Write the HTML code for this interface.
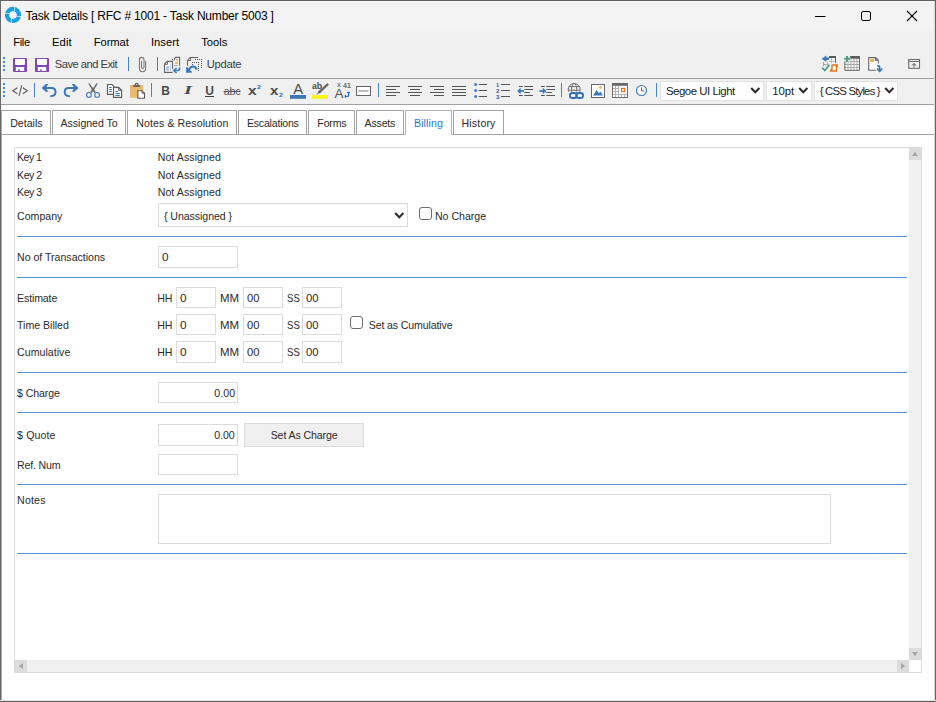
<!DOCTYPE html>
<html lang="en">
<head>
<meta charset="utf-8">
<title>Task Details [ RFC # 1001 - Task Number 5003 ]</title>
<style>
html,body{margin:0;padding:0;}
body{width:936px;height:702px;overflow:hidden;background:#fff;font-family:"Liberation Sans",sans-serif;}
#win{position:relative;width:936px;height:702px;overflow:hidden;background:#fff;}
#win *{box-sizing:border-box;}
.abs,.t,.ic,.ln,.sep,.box,.tab{position:absolute;}
.t{white-space:pre;line-height:16px;height:16px;}
#chrome{position:absolute;left:0;top:0;width:936px;height:105px;background:#f0f0f0;}
#titlebar{position:absolute;left:0;top:0;width:936px;height:31px;background:#f3f3f3;}
.hl{position:absolute;left:0;width:936px;height:1px;background:#a0a0a0;}
.sep{width:1px;background:#4d82cc;}
.grip{position:absolute;width:2px;height:14px;background:repeating-linear-gradient(to bottom,#3f8be0 0,#3f8be0 2px,transparent 2px,transparent 4px);}
.ic{overflow:visible;}
.tab{top:110px;height:25px;border:1px solid #a3a3a3;background:#fff;}
.tab.on{border-color:#b4b4b4;border-bottom-color:#fff;}
.box{border:1px solid #dcdcdc;background:#fff;}
.ln{left:17px;width:890px;height:1px;background:#5c8fd6;}
.cb{position:absolute;width:13px;height:13px;border:1px solid #6e6e6e;border-radius:3px;background:#fff;}
.sb{position:absolute;background:#f0f0f0;}
.sbb{position:absolute;background:#dcdcdc;}
.bd{position:absolute;}

</style>
</head>
<body>
<div id="win">
<div id="chrome"></div>
<div id="titlebar"></div>
<div class="hl" style="top:78px"></div>
<div class="hl" style="top:104px"></div>

<!-- title bar -->
<svg class="ic" style="left:4px;top:6px" width="18" height="18" viewBox="4 6 18 18">
 <circle cx="13" cy="14.95" r="5.95" fill="none" stroke="#1a9fe0" stroke-width="4.3"/>
 <g stroke="#f3f3f3" stroke-width="0.75" stroke-linecap="round" fill="none">
  <path d="M14.3 11.2 Q15.1 9.4 14.5 6.8"/>
  <path d="M14.3 11.2 Q15.1 9.4 14.5 6.8" transform="rotate(90 13 14.95)"/>
  <path d="M14.3 11.2 Q15.1 9.4 14.5 6.8" transform="rotate(180 13 14.95)"/>
  <path d="M14.3 11.2 Q15.1 9.4 14.5 6.8" transform="rotate(270 13 14.95)"/>
 </g>
</svg>
<svg class="ic" style="left:810px;top:6px" width="120" height="20" viewBox="0 0 120 20" fill="none" stroke="#000" stroke-width="1">
 <path d="M5 10.5 H15.5"/>
 <rect x="51.5" y="5.5" width="9" height="9" rx="1.6"/>
 <path d="M97 5 L107 15 M107 5 L97 15" stroke-width="1.1"/>
</svg>

<!-- toolbar 1 -->
<div class="grip" style="left:3px;top:57px"></div>
<div class="sep" style="left:128px;top:57px;height:14px"></div>
<div class="sep" style="left:157px;top:57px;height:14px"></div>
<svg class="ic" style="left:0;top:52px" width="936" height="26" viewBox="0 52 936 26">
 <!-- save -->
 <g id="save1">
  <rect x="13" y="58" width="14" height="14" rx="0.7" fill="#8347ad"/>
  <path d="M15 59 H25 V63.8 Q25 65 23.8 65 H16.2 Q15 65 15 63.8 Z" fill="#fff"/>
  <path d="M15.8 67 H24.2 V71 H19.7 V69.2 H18.2 V71 H15.8 Z" fill="#fff"/>
 </g>
 <g id="save2" transform="translate(22 0)">
  <rect x="13" y="58" width="14" height="14" rx="0.7" fill="#8347ad"/>
  <path d="M15 59 H25 V63.8 Q25 65 23.8 65 H16.2 Q15 65 15 63.8 Z" fill="#fff"/>
  <path d="M15.8 67 H24.2 V71 H19.7 V69.2 H18.2 V71 H15.8 Z" fill="#fff"/>
 </g>
 <!-- paperclip -->
 <g fill="none" stroke="#767676" stroke-width="1.05" stroke-linecap="round">
  <path d="M145.7 61.2 V68.6 A3.15 3.15 0 0 1 139.4 68.6 V59.7 A2.3 2.3 0 0 1 144 59.7 V67.2 A1.25 1.25 0 0 1 141.5 67.2 V61.6"/>
 </g>
 <!-- documents with chart + arrow -->
 <g fill="none" stroke-width="1.1">
  <path d="M174.4 61 V58.8 L175.7 57.4 H179.6 V66 H174 Z" fill="#fbfbfb" stroke="none"/>
  <path d="M174.4 60.6 V58.8 L175.7 57.4 H179.6 V65.8" stroke="#666"/>
  <rect x="172" y="59" width="1" height="1" fill="#555" stroke="none"/>
  <rect x="176.2" y="59.1" width="1.8" height="1.7" fill="#e6a84a" stroke="none"/>
  <rect x="175" y="62.1" width="3" height="1.7" fill="#e6a84a" stroke="none"/>
  <path d="M174.1 65.5 H177.8" stroke="#999" stroke-width="1"/>
  <path d="M164.5 72.4 V64.1 L167.2 61.4 H172.5 V72.4 Z" fill="#fff" stroke="none"/>
  <path d="M172.5 68.7 V61.4 H167.2 L164.5 64.1 V72.4 H172.7" stroke="#666" stroke-width="1.15"/>
  <path d="M164.6 64.3 H167.4 V61.6" stroke="#666" stroke-width="1"/>
  <rect x="166.1" y="66.2" width="2.7" height="4.5" fill="#a9c4e2" stroke="none"/>
  <rect x="170" y="63.3" width="1.1" height="7.4" fill="#c3d6ed" stroke="none"/>
  <path d="M179.6 67.2 V68.2 Q179.6 70.5 177.2 70.5 H174.4" stroke="#3b78b8" stroke-width="1.6"/>
  <path d="M176.6 68 L173.6 70.5 L176.6 73" stroke="#3b78b8" stroke-width="1.5"/>
 </g>
 <!-- undo page -->
 <g fill="none" stroke-width="1">
  <path d="M187.5 65.8 V60.4 L190.2 57.5 H198" stroke="#666" stroke-width="1.1"/>
  <path d="M187.8 60.5 H190.6 V57.6" stroke="#666"/>
  <g fill="#555" stroke="none"><rect x="195" y="59" width="1" height="1"/><rect x="197" y="59" width="1" height="1"/><rect x="199" y="59" width="1" height="1"/><rect x="201" y="59" width="1" height="1"/><rect x="201" y="61" width="1" height="1"/><rect x="201" y="63" width="1" height="1"/><rect x="201" y="65" width="1" height="1"/><rect x="201" y="67" width="1" height="1"/><rect x="192" y="62" width="1" height="1"/><rect x="194" y="62" width="1" height="1"/><rect x="196" y="62" width="1" height="1"/><rect x="198" y="62" width="1" height="1"/><rect x="198" y="64" width="1" height="1"/><rect x="198" y="66" width="1" height="1"/><rect x="198" y="68" width="1" height="1"/><rect x="198" y="70" width="1" height="1"/><rect x="192" y="64" width="1" height="1"/></g>
  <path d="M188.6 70.2 Q190.6 66.2 193.8 66.6 Q196 67 196.8 69.6" stroke="#3b78b8" stroke-width="2.1"/>
  <path d="M186.1 72.8 V67.2 H187.8 L189.4 70 L191.7 71.2 V72.8 Z" fill="#3b78b8" stroke="none"/>
 </g>
 <!-- right group A: arrow / table / check / scroll -->
 <g fill="none" stroke-width="1">
  <rect x="829" y="56" width="7" height="2.2" fill="#5a5a5a" stroke="none"/>
  <rect x="829" y="58.2" width="6" height="4.6" fill="#fff" stroke="none"/>
  <path d="M835.5 58 V62.8" stroke="#5a5a5a"/>
  <path d="M829 61.3 H835 M831.6 58.2 V63" stroke="#b0b0b0"/>
  <path d="M823.5 62 V66.2 M823.5 64.6 H827.6 V62.4" stroke="#a0a0a0"/>
  <path d="M821.7 58.7 L826.4 55.6 V57.6 H829.2 V59.9 H826.4 V61.9 Z" fill="#3b78b8" stroke="none"/>
  <path d="M822.2 67.6 L824.9 70.5 L829.4 64.7" stroke="#4f9a80" stroke-width="1.7"/>
  <path d="M832 65 H837.4 V66.4 H836.4 V71 H830.6 V70 H832 Z" fill="#fff" stroke="#e8731a" stroke-width="1.4" stroke-linejoin="round"/>
 </g>
 <!-- right group B: table with plus -->
 <g>
  <rect x="844.5" y="58" width="15.4" height="12.7" fill="#a8a8a8"/>
  <path d="M845 61 V70.2 H859.4 V58" fill="none" stroke="#5f5f5f" stroke-width="1"/>
  <rect x="849.6" y="56" width="10.3" height="2.4" fill="#5a5a5a"/>
  <g fill="#fff">
   <rect x="848.5" y="59.2" width="2" height="1.9"/><rect x="851.5" y="59.2" width="2" height="1.9"/><rect x="854.5" y="59.2" width="2" height="1.9"/><rect x="857.5" y="59.2" width="1.6" height="1.9"/>
   <rect x="845.5" y="62.1" width="2" height="1.9"/><rect x="848.5" y="62.1" width="2" height="1.9"/><rect x="851.5" y="62.1" width="2" height="1.9"/><rect x="854.5" y="62.1" width="2" height="1.9"/><rect x="857.5" y="62.1" width="1.6" height="1.9"/>
   <rect x="845.5" y="65" width="2" height="1.9"/><rect x="848.5" y="65" width="2" height="1.9"/><rect x="851.5" y="65" width="2" height="1.9"/><rect x="854.5" y="65" width="2" height="1.9"/><rect x="857.5" y="65" width="1.6" height="1.9"/>
   <rect x="845.5" y="67.9" width="2" height="1.9"/><rect x="848.5" y="67.9" width="2" height="1.9"/><rect x="851.5" y="67.9" width="2" height="1.9"/><rect x="854.5" y="67.9" width="2" height="1.9"/><rect x="857.5" y="67.9" width="1.6" height="1.9"/>
  </g>
  <rect x="843.6" y="55.4" width="6.6" height="6" fill="#f0f0f0"/>
  <path d="M844.2 58.8 H850 M847.1 56 V61.7" stroke="#4f9a80" stroke-width="2.1" fill="none"/>
 </g>
 <!-- right group C: page with arrow -->
 <g fill="none" stroke-width="1.1">
  <path d="M868.7 57.6 H875.6 L878.3 60.3 V70.3 H868.7 Z" fill="#fff" stroke="none"/>
  <path d="M878.3 63.6 V60.3 L875.6 57.6 H868.7 V70.3 H876" stroke="#666"/>
  <path d="M875.6 57.6 V60.3 H878.3" stroke="#666"/>
  <rect x="870" y="59" width="4.2" height="2.9" fill="#e9b364" stroke="none"/>
  <path d="M877.2 65.6 Q879.6 65.6 879.6 68 V70.6" stroke="#3b78b8" stroke-width="1.8"/>
  <path d="M877 68.6 L879.6 71.2 L882.2 68.6" fill="none" stroke="#3b78b8" stroke-width="1.7"/>
 </g>
 <!-- right group D: window with up arrow -->
 <g fill="none">
  <rect x="908.7" y="59.5" width="10.8" height="8.8" stroke="#6e6e6e" stroke-width="1.1"/>
  <path d="M908.7 61.5 H919.5" stroke="#6e6e6e" stroke-width="1"/>
  <path d="M911.3 65.4 L914.05 62.8 L916.8 65.4 Z" fill="#808080"/>
  <path d="M914.05 65.2 V67.8" stroke="#a0a0a0" stroke-width="1.5"/>
 </g>
</svg>



<!-- toolbar 2 -->
<div class="grip" style="left:3px;top:83px"></div>
<div class="sep" style="left:34px;top:83px;height:14px"></div>
<div class="sep" style="left:151px;top:83px;height:14px"></div>
<div class="sep" style="left:378px;top:83px;height:14px"></div>
<div class="sep" style="left:561px;top:83px;height:14px"></div>
<div class="sep" style="left:656px;top:83px;height:14px"></div>
<svg class="ic" style="left:0;top:79px" width="936" height="25" viewBox="0 79 936 25">
 <!-- source </> -->
 <g fill="none" stroke="#5c5c5c" stroke-width="1.1">
  <path d="M17.4 87.8 L12.8 90.8 L17.4 93.8"/>
  <path d="M21.8 85.4 L19 95.8"/>
  <path d="M22.8 87.8 L27.4 90.8 L22.8 93.8"/>
 </g>
 <!-- undo -->
 <g id="undo">
  <path d="M41.7 87.9 L45.8 84 H48.5 L46.6 86.4 V89.4 L48.5 91.8 H45.8 Z" fill="#3b78b8"/>
  <path d="M45.6 87.9 H51.6 C54.3 87.9 55.5 90 55.5 92 C55.5 94.6 53.4 96.2 50.3 96.2" fill="none" stroke="#3b78b8" stroke-width="2"/>
 </g>
 <!-- redo (mirror) -->
 <g transform="translate(120.2 0) scale(-1 1)">
  <path d="M41.7 87.9 L45.8 84 H48.5 L46.6 86.4 V89.4 L48.5 91.8 H45.8 Z" fill="#3b78b8"/>
  <path d="M45.6 87.9 H51.6 C54.3 87.9 55.5 90 55.5 92 C55.5 94.6 53.4 96.2 50.3 96.2" fill="none" stroke="#3b78b8" stroke-width="2"/>
 </g>
 <!-- cut -->
 <g fill="none">
  <path d="M88.3 83.5 L89.5 83.2 L95.9 92.2 L94.4 93 L92.2 90.6 Z" fill="#6a6a6a"/>
  <path d="M97.7 83.5 L96.5 83.2 L90.1 92.2 L91.6 93 L93.8 90.6 Z" fill="#6a6a6a"/>
  <circle cx="88.9" cy="94.9" r="2.4" stroke="#3b78b8" stroke-width="1.1"/>
  <circle cx="97.1" cy="94.9" r="2.4" stroke="#3b78b8" stroke-width="1.1"/>
 </g>
 <!-- copy -->
 <g fill="#fff" stroke="#5c5c5c" stroke-width="1.15">
  <path d="M107.5 84.5 H112 L114.2 86.7 V94.3 H107.5 Z"/>
  <path d="M109.2 87.5 H111.8 M109.2 89.5 H111.8 M109.2 91.5 H111.8" stroke="#3b78b8" stroke-width="1"/>
  <path d="M113.5 87.3 H118.6 L121.6 90.3 V97.4 H113.5 Z"/>
  <path d="M118.6 87.3 V90.3 H121.6" fill="none" stroke-width="1"/>
  <path d="M115.4 91.5 H117.8 M115.4 93.5 H119.8 M115.4 95.5 H119.8" stroke="#3b78b8" stroke-width="1"/>
 </g>
 <!-- paste -->
 <g>
  <rect x="130" y="85" width="13" height="12.8" fill="#e8b96f"/>
  <path d="M135.3 85.2 V84.4 Q135.3 83.4 136.65 83.4 Q138 83.4 138 84.4 V85.2" fill="none" stroke="#5c5c5c" stroke-width="1.1"/>
  <rect x="133.2" y="85.1" width="6.9" height="1.8" fill="#5c5c5c"/>
  <path d="M137.8 90.7 H142 L144.5 93.2 V98.2 H137.8 Z" fill="#fff" stroke="#5c5c5c" stroke-width="1.15"/>
  <path d="M142 90.7 V93.2 H144.5" fill="none" stroke="#5c5c5c" stroke-width="1"/>
 </g>
 <!-- underline bar for U -->
 <rect x="205" y="96" width="9" height="1" fill="#444"/>
 <!-- font color bar -->
 <rect x="290" y="95" width="16" height="3.8" fill="#3b76b5"/>
 <!-- highlight bar + pen -->
 <rect x="312" y="95" width="16" height="3.8" fill="#fbf31c"/>
 <path d="M327.4 84.6 L319.4 92" stroke="#6a6a6a" stroke-width="2.4" stroke-linecap="round" fill="none"/>
 <path d="M319.6 91.2 L315.6 94.8 L320.8 92.6 Z" fill="#555"/>
 <!-- font size arrows -->
 <g fill="none" stroke="#2f6fcc" stroke-width="1.4">
  <path d="M345.2 96.4 H347.4 Q348.6 96.4 348.6 95.2 V92.2"/>
  <path d="M347.2 92.4 H350" stroke-width="1.2"/>
  <path d="M345.4 95 V97.8" stroke-width="1.2"/>
 </g>
 <!-- horizontal rule -->
 <rect x="356.5" y="86.5" width="14" height="9" fill="#fff" stroke="#666" stroke-width="1"/>
 <path d="M358.6 91 H368.4" stroke="#aaa" stroke-width="1.6"/>
 <!-- alignment -->
 <g stroke="#555" stroke-width="1" fill="none">
  <path d="M386 86.5 H400 M386 89.5 H396 M386 92.5 H400 M386 95.5 H396"/>
  <path d="M408 86.5 H422 M410 89.5 H420 M408 92.5 H422 M410 95.5 H420"/>
  <path d="M430 86.5 H444 M434 89.5 H444 M430 92.5 H444 M434 95.5 H444"/>
  <path d="M452 86.5 H466 M452 89.5 H466 M452 92.5 H466 M452 95.5 H466"/>
 </g>
 <!-- bullet list -->
 <g>
  <circle cx="475.6" cy="84.6" r="1.5" fill="#4480c4"/><circle cx="475.6" cy="90.5" r="1.5" fill="#4480c4"/><circle cx="475.6" cy="96.4" r="1.5" fill="#4480c4"/>
  <path d="M478.8 84.5 H487 M478.8 90.5 H487 M478.8 96.5 H487" stroke="#555" stroke-width="1"/>
 </g>
 <!-- numbered list lines -->
 <path d="M501 84.5 H510 M501 90.5 H510 M501 96.5 H510" stroke="#555" stroke-width="1"/>
 <!-- outdent -->
 <g>
  <path d="M519 86.5 H522.8 M524.3 86.5 H533 M524.3 89.5 H533 M524.3 92.5 H529.8 M519 95.5 H522.8 M524.3 95.5 H533" stroke="#555" stroke-width="1"/>
  <path d="M517 91 L520.6 87.8 V94.2 Z" fill="#3b78b8"/>
  <path d="M520 91 H524" stroke="#3b78b8" stroke-width="1.8"/>
 </g>
 <!-- indent -->
 <g>
  <path d="M541 86.5 H544.8 M546.3 86.5 H555 M546.3 89.5 H555 M546.3 92.5 H551.8 M541 95.5 H544.8 M546.3 95.5 H555" stroke="#555" stroke-width="1"/>
  <path d="M546.4 91 L542.8 87.8 V94.2 Z" fill="#3b78b8"/>
  <path d="M539.4 91 H543.4" stroke="#3b78b8" stroke-width="1.8"/>
 </g>
 <!-- hyperlink -->
 <g fill="none">
  <clipPath id="gc"><rect x="566" y="82" width="16" height="9.7"/></clipPath>
  <g clip-path="url(#gc)" stroke="#6e6e6e" stroke-width="1">
   <circle cx="574.2" cy="89.5" r="6"/>
   <ellipse cx="574.2" cy="89.5" rx="2.6" ry="6"/>
   <path d="M569 86.6 H579.4 M568.2 90.2 H580.2"/>
  </g>
  <rect x="569" y="92.2" width="14.6" height="6.8" fill="#f0f0f0" stroke="none"/>
  <rect x="569.9" y="93" width="6.9" height="5" rx="2.5" stroke="#2f6fb5" stroke-width="1.8"/>
  <rect x="576.2" y="93" width="6.9" height="5" rx="2.5" stroke="#2f6fb5" stroke-width="1.8"/>
 </g>
 <!-- image -->
 <g>
  <rect x="591.5" y="84.5" width="13" height="13" fill="#fff" stroke="#666" stroke-width="1"/>
  <path d="M593 95.6 L596.6 90 L599 93.2 L600.4 91.6 L603 95.6 Z" fill="#3b78b8"/>
  <circle cx="600.4" cy="87.5" r="1.4" fill="#f0b65e"/>
 </g>
 <!-- table / calendar -->
 <g>
  <rect x="612" y="83" width="16" height="15" fill="#b2b2b2"/>
  <rect x="612.5" y="83.5" width="15" height="14" fill="none" stroke="#6e6e6e" stroke-width="1"/>
  <rect x="612" y="83" width="16" height="2.6" fill="#6a6a6a"/>
  <g fill="#fff">
   <rect x="613" y="86" width="2" height="2"/><rect x="616" y="86" width="2" height="2"/>
   <rect x="613" y="89" width="2" height="2"/><rect x="616" y="89" width="2" height="2"/>
   <rect x="613" y="92" width="2" height="2"/><rect x="616" y="92" width="2" height="2"/>
   <rect x="613" y="95" width="2" height="2"/><rect x="616" y="95" width="2" height="2"/><rect x="619" y="95" width="2" height="2"/><rect x="622" y="95" width="2" height="2"/><rect x="625" y="95" width="2" height="2"/>
   <rect x="619" y="86" width="8" height="8"/>
  </g>
  <rect x="621.5" y="88.4" width="3.2" height="3.2" fill="#fff" stroke="#e8731a" stroke-width="1.2"/>
 </g>
 <!-- clock -->
 <g fill="none">
  <circle cx="641.5" cy="90.5" r="5" fill="#fff" stroke="#3b78c0" stroke-width="1.1"/>
  <path d="M641.5 87.6 V90.9 H644.4" stroke="#666" stroke-width="1"/>
 </g>
</svg>


<div class="box" style="left:660px;top:81px;width:104px;height:20px;border-color:#e2e2e2"></div>
<div class="box" style="left:766px;top:81px;width:46px;height:20px;border-color:#e2e2e2"></div>
<div class="box" style="left:814px;top:81px;width:84px;height:20px;border-color:#e2e2e2"></div>
<svg class="ic" style="left:750px;top:86px" width="11" height="9" viewBox="0 0 11 9" fill="none" stroke="#2b2b2b" stroke-width="2"><path d="M1.2 2 L5.3 6.3 L9.4 2"/></svg>
<svg class="ic" style="left:798px;top:86px" width="11" height="9" viewBox="0 0 11 9" fill="none" stroke="#2b2b2b" stroke-width="2"><path d="M1.2 2 L5.3 6.3 L9.4 2"/></svg>
<svg class="ic" style="left:884px;top:86px" width="11" height="9" viewBox="0 0 11 9" fill="none" stroke="#2b2b2b" stroke-width="2"><path d="M1.2 2 L5.3 6.3 L9.4 2"/></svg>

<!-- tabs -->
<div class="hl" style="top:134px;left:1px;width:934px;background:#a3a3a3"></div>
<div class="tab" style="left:1px;width:50px"></div>
<div class="tab" style="left:52px;width:74px"></div>
<div class="tab" style="left:127px;width:110px"></div>
<div class="tab" style="left:238px;width:69px"></div>
<div class="tab" style="left:308px;width:47px"></div>
<div class="tab" style="left:356px;width:48px"></div>
<div class="tab on" style="left:405px;width:47px"></div>
<div class="tab" style="left:453px;width:51px"></div>

<!-- content panel -->
<div class="box" style="left:14px;top:147px;width:908px;height:526px;border-color:#dcdcdc"></div>
<div class="sb" style="left:909px;top:148px;width:12px;height:512px"></div>
<div class="sbb" style="left:909px;top:148px;width:12px;height:12px"></div>
<div class="sbb" style="left:909px;top:648px;width:12px;height:12px"></div>
<div class="sb" style="left:15px;top:660px;width:894px;height:12px"></div>
<div class="sbb" style="left:15px;top:660px;width:12px;height:12px"></div>
<div class="sbb" style="left:897px;top:660px;width:12px;height:12px"></div>
<svg class="ic" style="left:909px;top:148px" width="12" height="12" viewBox="0 0 12 12"><path d="M3 8 L6 3.8 L9 8 Z" fill="#a6a6a6"/></svg>
<svg class="ic" style="left:909px;top:648px" width="12" height="12" viewBox="0 0 12 12"><path d="M3 4 L6 8.2 L9 4 Z" fill="#a6a6a6"/></svg>
<svg class="ic" style="left:15px;top:660px" width="12" height="12" viewBox="0 0 12 12"><path d="M8 3 L3.8 6 L8 9 Z" fill="#a6a6a6"/></svg>
<svg class="ic" style="left:897px;top:660px" width="12" height="12" viewBox="0 0 12 12"><path d="M4 3 L8.2 6 L4 9 Z" fill="#a6a6a6"/></svg>

<!-- form -->
<div class="ln" style="top:236px"></div>
<div class="ln" style="top:277px"></div>
<div class="ln" style="top:372px"></div>
<div class="ln" style="top:412px"></div>
<div class="ln" style="top:484px"></div>
<div class="ln" style="top:553px"></div>

<div class="box" style="left:158px;top:203px;width:250px;height:24px"></div>
<svg class="ic" style="left:394px;top:211px" width="11" height="9" viewBox="0 0 11 9" fill="none" stroke="#2b2b2b" stroke-width="2"><path d="M1.2 2 L5.3 6.3 L9.4 2"/></svg>
<div class="cb" style="left:419px;top:207px"></div>
<div class="box" style="left:158px;top:246px;width:80px;height:22px"></div>

<div class="box" style="left:176px;top:287px;width:40px;height:21px"></div>
<div class="box" style="left:243px;top:287px;width:40px;height:21px"></div>
<div class="box" style="left:302px;top:287px;width:40px;height:21px"></div>
<div class="box" style="left:176px;top:314px;width:40px;height:21px"></div>
<div class="box" style="left:243px;top:314px;width:40px;height:21px"></div>
<div class="box" style="left:302px;top:314px;width:40px;height:21px"></div>
<div class="cb" style="left:350px;top:316px"></div>
<div class="box" style="left:176px;top:341px;width:40px;height:22px"></div>
<div class="box" style="left:243px;top:341px;width:40px;height:22px"></div>
<div class="box" style="left:302px;top:341px;width:40px;height:22px"></div>

<div class="box" style="left:158px;top:382px;width:80px;height:21px"></div>
<div class="box" style="left:158px;top:424px;width:80px;height:22px"></div>
<div class="box" style="left:244px;top:423px;width:120px;height:24px;background:#f0f0f0;border-color:#dcdcdc"></div>
<div class="box" style="left:158px;top:454px;width:80px;height:21px"></div>
<div class="box" style="left:158px;top:494px;width:673px;height:50px"></div>

<span class="t" style="left:25.48px;top:7.54px;font-size:12.0px;letter-spacing:-0.195px;color:#000;">Task Details [ RFC # 1001 - Task Number 5003 ]</span>
<span class="t" style="left:13.13px;top:33.92px;font-size:11.2px;letter-spacing:-0.329px;color:#000;">File</span>
<span class="t" style="left:51.93px;top:33.92px;font-size:11.2px;letter-spacing:0.154px;color:#000;">Edit</span>
<span class="t" style="left:93.73px;top:33.92px;font-size:11.2px;letter-spacing:-0.059px;color:#000;">Format</span>
<span class="t" style="left:150.93px;top:33.92px;font-size:11.2px;letter-spacing:0.032px;color:#000;">Insert</span>
<span class="t" style="left:201.13px;top:33.92px;font-size:11.2px;letter-spacing:0.005px;color:#000;">Tools</span>
<span class="t" style="left:54.73px;top:55.52px;font-size:11.2px;letter-spacing:-0.509px;color:#3c3c3c;">Save and Exit</span>
<span class="t" style="left:206.73px;top:55.52px;font-size:11.2px;letter-spacing:-0.267px;color:#3c3c3c;">Update</span>
<span class="t" style="left:665.92px;top:83.05px;font-size:11.4px;letter-spacing:-0.461px;color:#222;">Segoe UI Light</span>
<span class="t" style="left:772.32px;top:83.05px;font-size:11.4px;letter-spacing:-0.101px;color:#222;">10pt</span>
<span class="t" style="left:819.72px;top:83.05px;font-size:11.4px;letter-spacing:-0.814px;color:#222;">{ CSS Styles }</span>
<span class="t" style="left:10.16px;top:115.13px;font-size:10.6px;letter-spacing:0.014px;color:#2a2a2a;">Details</span>
<span class="t" style="left:60.56px;top:115.13px;font-size:10.6px;letter-spacing:-0.046px;color:#2a2a2a;">Assigned To</span>
<span class="t" style="left:136.36px;top:115.13px;font-size:10.6px;letter-spacing:0.076px;color:#2a2a2a;">Notes &amp; Resolution</span>
<span class="t" style="left:246.96px;top:115.13px;font-size:10.6px;letter-spacing:-0.222px;color:#2a2a2a;">Escalations</span>
<span class="t" style="left:317.36px;top:115.13px;font-size:10.6px;letter-spacing:-0.186px;color:#2a2a2a;">Forms</span>
<span class="t" style="left:364.56px;top:115.13px;font-size:10.6px;letter-spacing:-0.185px;color:#2a2a2a;">Assets</span>
<span class="t" style="left:413.96px;top:115.13px;font-size:10.6px;letter-spacing:0.118px;color:#1c78d8;">Billing</span>
<span class="t" style="left:461.56px;top:115.13px;font-size:10.6px;letter-spacing:0.151px;color:#2a2a2a;">History</span>
<span class="t" style="left:17.06px;top:149.13px;font-size:10.6px;letter-spacing:-0.530px;color:#2b2b2b;">Key 1</span>
<span class="t" style="left:17.06px;top:166.73px;font-size:10.6px;letter-spacing:-0.480px;color:#2b2b2b;">Key 2</span>
<span class="t" style="left:17.06px;top:184.23px;font-size:10.6px;letter-spacing:-0.480px;color:#2b2b2b;">Key 3</span>
<span class="t" style="left:157.66px;top:149.13px;font-size:10.6px;letter-spacing:0.076px;color:#2b2b2b;">Not Assigned</span>
<span class="t" style="left:157.66px;top:166.73px;font-size:10.6px;letter-spacing:0.076px;color:#2b2b2b;">Not Assigned</span>
<span class="t" style="left:157.66px;top:184.23px;font-size:10.6px;letter-spacing:0.076px;color:#2b2b2b;">Not Assigned</span>
<span class="t" style="left:17.06px;top:207.93px;font-size:10.6px;letter-spacing:0.005px;color:#2b2b2b;">Company</span>
<span class="t" style="left:163.96px;top:208.33px;font-size:10.6px;letter-spacing:-0.058px;color:#2b2b2b;">{ Unassigned }</span>
<span class="t" style="left:434.96px;top:207.93px;font-size:10.6px;letter-spacing:-0.020px;color:#2b2b2b;">No Charge</span>
<span class="t" style="left:17.06px;top:249.33px;font-size:10.6px;letter-spacing:-0.015px;color:#2b2b2b;">No of Transactions</span>
<span class="t" style="left:162.16px;top:249.33px;font-size:10.6px;color:#2b2b2b;transform:scaleX(1.113);transform-origin:0 0;">0</span>
<span class="t" style="left:157.16px;top:290.13px;font-size:10.6px;color:#2b2b2b;">HH</span>
<span class="t" style="left:179.96px;top:290.13px;font-size:10.6px;color:#2b2b2b;transform:scaleX(1.113);transform-origin:0 0;">0</span>
<span class="t" style="left:220.26px;top:290.13px;font-size:10.6px;color:#2b2b2b;transform:scaleX(1.080);transform-origin:0 0;">MM</span>
<span class="t" style="left:246.86px;top:290.13px;font-size:10.6px;color:#2b2b2b;transform:scaleX(1.057);transform-origin:0 0;">00</span>
<span class="t" style="left:286.56px;top:290.13px;font-size:10.6px;color:#2b2b2b;transform:scaleX(0.903);transform-origin:0 0;">SS</span>
<span class="t" style="left:306.36px;top:290.13px;font-size:10.6px;color:#2b2b2b;transform:scaleX(1.066);transform-origin:0 0;">00</span>
<span class="t" style="left:157.16px;top:317.03px;font-size:10.6px;color:#2b2b2b;">HH</span>
<span class="t" style="left:179.96px;top:317.03px;font-size:10.6px;color:#2b2b2b;transform:scaleX(1.113);transform-origin:0 0;">0</span>
<span class="t" style="left:220.26px;top:317.03px;font-size:10.6px;color:#2b2b2b;transform:scaleX(1.080);transform-origin:0 0;">MM</span>
<span class="t" style="left:246.86px;top:317.03px;font-size:10.6px;color:#2b2b2b;transform:scaleX(1.057);transform-origin:0 0;">00</span>
<span class="t" style="left:286.56px;top:317.03px;font-size:10.6px;color:#2b2b2b;transform:scaleX(0.903);transform-origin:0 0;">SS</span>
<span class="t" style="left:306.36px;top:317.03px;font-size:10.6px;color:#2b2b2b;transform:scaleX(1.066);transform-origin:0 0;">00</span>
<span class="t" style="left:157.16px;top:344.23px;font-size:10.6px;color:#2b2b2b;">HH</span>
<span class="t" style="left:179.96px;top:344.23px;font-size:10.6px;color:#2b2b2b;transform:scaleX(1.113);transform-origin:0 0;">0</span>
<span class="t" style="left:220.26px;top:344.23px;font-size:10.6px;color:#2b2b2b;transform:scaleX(1.080);transform-origin:0 0;">MM</span>
<span class="t" style="left:246.86px;top:344.23px;font-size:10.6px;color:#2b2b2b;transform:scaleX(1.057);transform-origin:0 0;">00</span>
<span class="t" style="left:286.56px;top:344.23px;font-size:10.6px;color:#2b2b2b;transform:scaleX(0.903);transform-origin:0 0;">SS</span>
<span class="t" style="left:306.36px;top:344.23px;font-size:10.6px;color:#2b2b2b;transform:scaleX(1.066);transform-origin:0 0;">00</span>
<span class="t" style="left:17.06px;top:290.13px;font-size:10.6px;letter-spacing:-0.135px;color:#2b2b2b;">Estimate</span>
<span class="t" style="left:17.06px;top:317.03px;font-size:10.6px;letter-spacing:-0.024px;color:#2b2b2b;">Time Billed</span>
<span class="t" style="left:368.76px;top:317.03px;font-size:10.6px;letter-spacing:-0.131px;color:#2b2b2b;">Set as Cumulative</span>
<span class="t" style="left:17.06px;top:344.23px;font-size:10.6px;letter-spacing:0.030px;color:#2b2b2b;">Cumulative</span>
<span class="t" style="left:17.06px;top:385.33px;font-size:10.6px;letter-spacing:-0.117px;color:#2b2b2b;">$ Charge</span>
<span class="t" style="left:214.16px;top:385.33px;font-size:10.6px;letter-spacing:0.082px;color:#2b2b2b;">0.00</span>
<span class="t" style="left:17.06px;top:427.13px;font-size:10.6px;letter-spacing:0.128px;color:#2b2b2b;">$ Quote</span>
<span class="t" style="left:214.26px;top:427.03px;font-size:10.6px;letter-spacing:-0.051px;color:#2b2b2b;">0.00</span>
<span class="t" style="left:270.66px;top:427.03px;font-size:10.6px;letter-spacing:-0.112px;color:#2b2b2b;">Set As Charge</span>
<span class="t" style="left:17.06px;top:456.93px;font-size:10.6px;letter-spacing:-0.168px;color:#2b2b2b;">Ref. Num</span>
<span class="t" style="left:17.06px;top:492.13px;font-size:10.6px;letter-spacing:0.196px;color:#2b2b2b;">Notes</span>
<span class="t" style="left:161.28px;top:82.54px;font-size:12.0px;color:#4c4c4c;font-weight:bold;">B</span>
<span class="t" style="left:183.64px;top:82.33px;font-size:12.6px;color:#4c4c4c;font-family:'Liberation Serif',serif;font-weight:bold;font-style:italic;transform:scaleX(1.613);transform-origin:0 0;">I</span>
<span class="t" style="left:205.28px;top:82.54px;font-size:12.0px;color:#4c4c4c;font-weight:bold;">U</span>
<span class="t" style="left:223.66px;top:83.33px;font-size:10.6px;letter-spacing:-0.061px;color:#555;text-decoration:line-through;">abc</span>
<span class="t" style="left:247.60px;top:82.76px;font-size:13.4px;color:#4c4c4c;font-weight:bold;transform:scaleX(1.155);transform-origin:0 0;">x</span>
<span class="t" style="left:256.83px;top:78.85px;font-size:6.2px;color:#2f6fb5;font-weight:bold;transform:scaleX(1.142);transform-origin:0 0;">2</span>
<span class="t" style="left:269.60px;top:82.76px;font-size:13.4px;color:#4c4c4c;font-weight:bold;transform:scaleX(1.128);transform-origin:0 0;">x</span>
<span class="t" style="left:278.83px;top:87.05px;font-size:6.2px;color:#2f6fb5;font-weight:bold;transform:scaleX(1.142);transform-origin:0 0;">2</span>
<span class="t" style="left:293.30px;top:80.67px;font-size:14.8px;color:#4c4c4c;">A</span>
<span class="t" style="left:311.81px;top:78.86px;font-size:8.2px;color:#4c4c4c;font-weight:bold;transform:scaleX(1.065);transform-origin:0 0;">ab</span>
<span class="t" style="left:334.60px;top:85.76px;font-size:13.4px;color:#555;">A</span>
<span class="t" style="left:336.77px;top:77.48px;font-size:6.4px;color:#777;font-weight:bold;transform:scaleX(1.082);transform-origin:0 0;">x</span>
<span class="t" style="left:342.60px;top:77.54px;font-size:6.8px;color:#666;font-weight:bold;transform:scaleX(1.032);transform-origin:0 0;">41</span>
<span class="t" style="left:496.08px;top:76.76px;font-size:5.9px;color:#1f5fae;font-weight:bold;transform:scaleX(0.925);transform-origin:0 0;">1</span>
<span class="t" style="left:495.88px;top:82.76px;font-size:5.9px;color:#1f5fae;font-weight:bold;transform:scaleX(1.047);transform-origin:0 0;">2</span>
<span class="t" style="left:495.88px;top:88.76px;font-size:5.9px;color:#1f5fae;font-weight:bold;transform:scaleX(1.047);transform-origin:0 0;">3</span>

<!-- window frame -->
<div class="bd" style="left:0;top:0;width:936px;height:1px;background:#5e5e5e"></div>
<div class="bd" style="left:1px;top:1px;width:933px;height:1px;background:#fafafa"></div>
<div class="bd" style="left:0;top:0;width:1px;height:702px;background:#686868"></div>
<div class="bd" style="left:1px;top:1px;width:1px;height:77px;background:#fafafa"></div>
<div class="bd" style="left:1px;top:79px;width:1px;height:25px;background:#fafafa"></div>
<div class="bd" style="left:1px;top:110px;width:1px;height:591px;background:#ababab"></div>
<div class="bd" style="left:934px;top:1px;width:1px;height:700px;background:#dcdcdc"></div>
<div class="bd" style="left:935px;top:0;width:1px;height:702px;background:#646464"></div>
<div class="bd" style="left:0;top:700px;width:936px;height:1px;background:#e4e4e4"></div>
<div class="bd" style="left:0;top:701px;width:936px;height:1px;background:#5e5e5e"></div>
</div>

</body>
</html>
